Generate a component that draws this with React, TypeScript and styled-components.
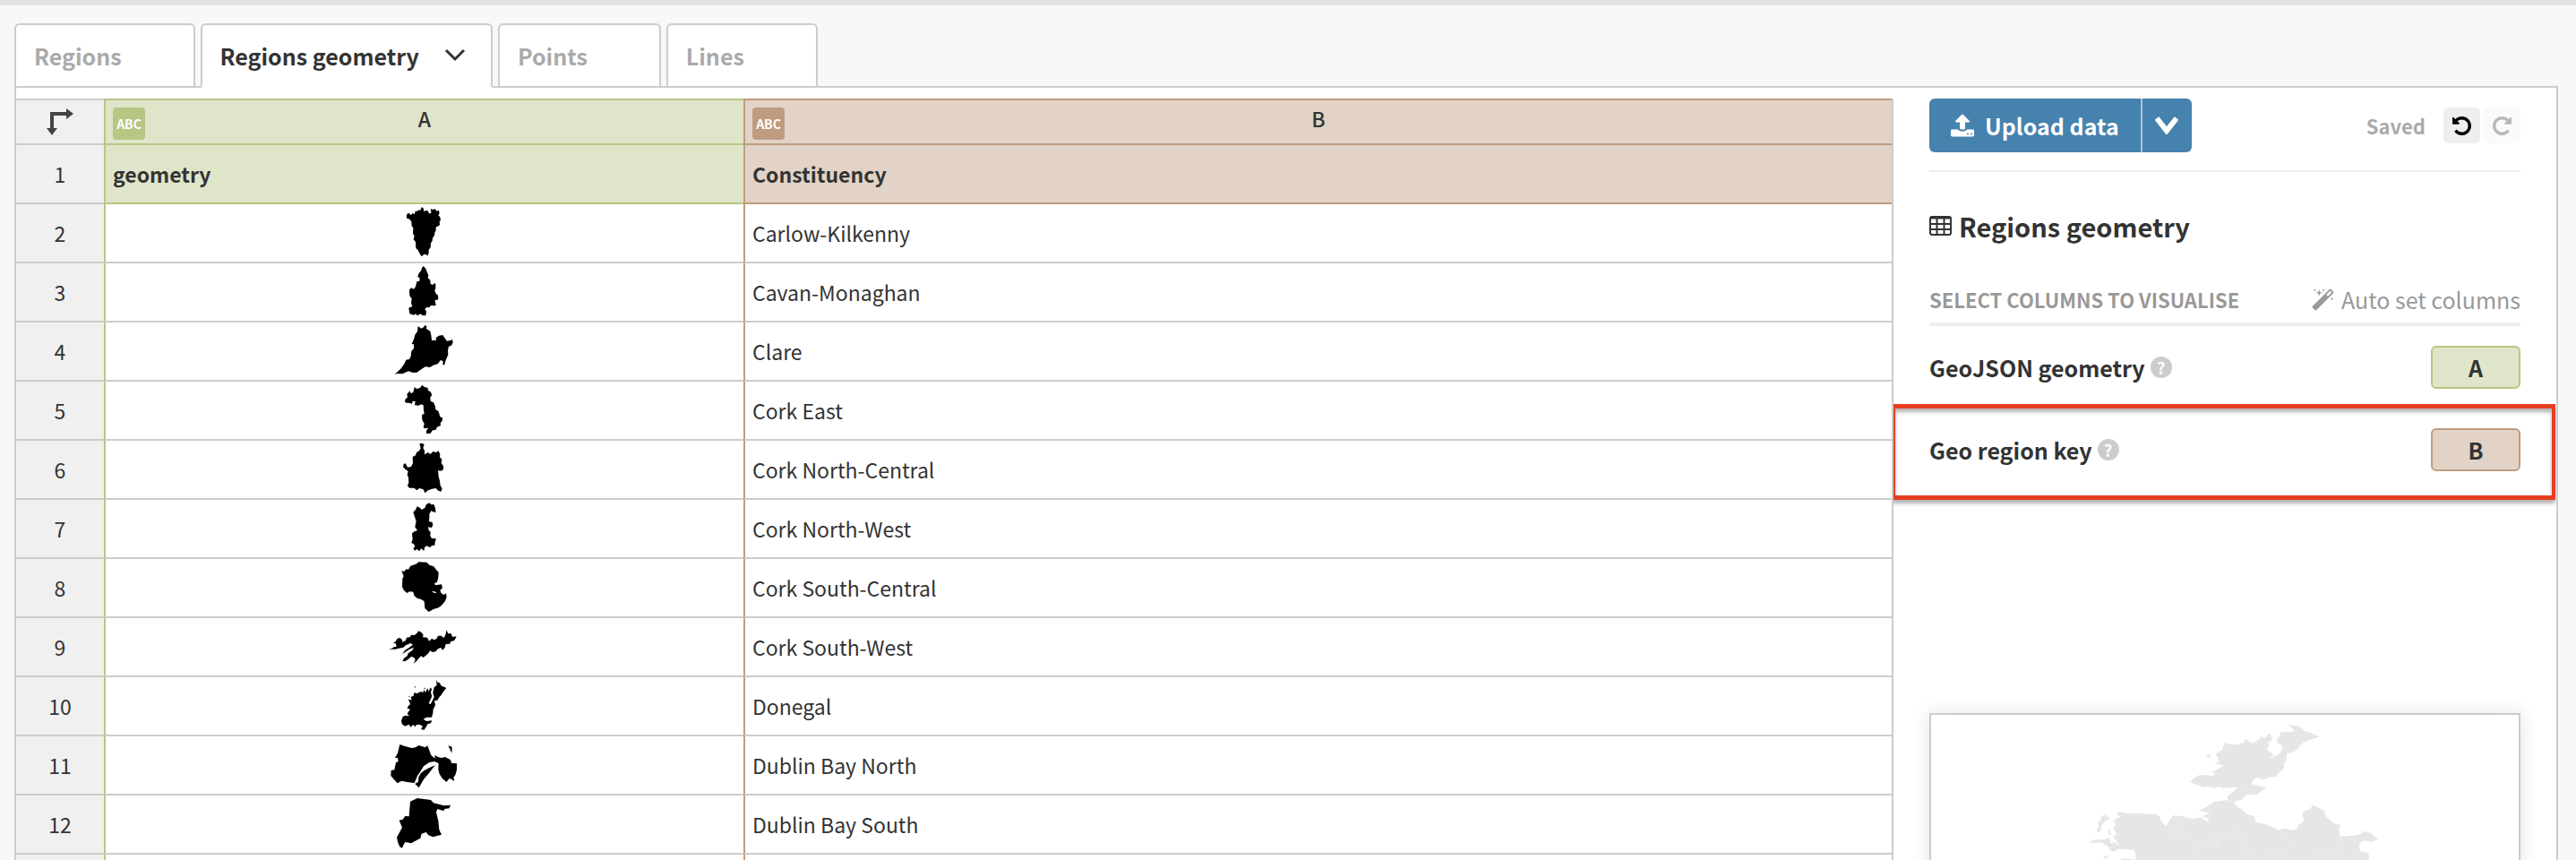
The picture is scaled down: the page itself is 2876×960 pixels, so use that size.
import React from "react";
import styled, { createGlobalStyle, css } from "styled-components";

const GlobalStyle = createGlobalStyle`
  *, *::before, *::after { box-sizing: border-box; }
  body {
    margin: 0;
    background: #f8f8f8;
    color: #333;
    font-family: "Noto Sans CJK SC", "Noto Sans", sans-serif;
    font-size: 23px;
    line-height: 32px;
  }
  button, input { font: inherit; color: inherit; margin: 0; }
`;

const tones = {
  green: { fill: "#dfe5c9", line: "#b8c684" },
  brown: { fill: "#e2d3c6", line: "#bf9c80" },
};
type Tone = keyof typeof tones;

const Page = styled.div`
  display: flex;
  flex-direction: column;
  height: 100vh;
  overflow: hidden;
  padding: 20px 20px 0 16px;
  border-top: 6px solid #e2e2e2;
`;

const TabBar = styled.nav`
  display: flex;
  gap: 6px;
  flex: none;
  margin-bottom: -2px;
  position: relative;
  z-index: 1;
`;

const Tab = styled.button<{ $active?: boolean }>`
  display: flex;
  align-items: center;
  gap: 28px;
  height: 72px;
  padding: 0 ${(p) => (p.$active ? 28 : 80)}px 0 20px;
  background: #fff;
  border: 2px solid #ccc;
  border-bottom-color: ${(p) => (p.$active ? "#fff" : "#ccc")};
  border-radius: 6px 6px 0 0;
  color: ${(p) => (p.$active ? "#333" : "#aaa")};
  font-size: 25px;
  font-weight: 700;
  white-space: nowrap;
`;

const Workspace = styled.main`
  display: flex;
  flex: 1;
  min-height: 0;
  padding-top: 12px;
  background: #fff;
  border: 2px solid #ccc;
  border-bottom: 0;
`;

const Sheet = styled.section`
  flex: 1;
  min-width: 0;
  overflow: hidden;
  border-right: 2px solid #ccc;
`;

const Grid = styled.table`
  width: 100%;
  table-layout: fixed;
  border-spacing: 0;
`;

const IndexCol = styled.col`
  width: 98px;
`;
const GeometryCol = styled.col`
  width: 714px;
`;

const IndexCell = styled.th<{ $corner?: boolean }>`
  height: ${(p) => (p.$corner ? 52 : 66)}px;
  padding: 0;
  background: #f0f0f0;
  border-bottom: 2px solid #ccc;
  border-top: ${(p) => (p.$corner ? "2px solid #ccc" : "0")};
  font-weight: 400;
  text-align: center;
  svg { display: block; margin: 0 auto; }
`;

const toned = css<{ $tone: Tone }>`
  background: ${(p) => tones[p.$tone].fill};
  border: 0 solid ${(p) => tones[p.$tone].line};
`;

const LetterCell = styled.th<{ $tone: Tone }>`
  ${toned}
  border-width: 2px 0 2px 2px;
  padding: 0 8px;
  font-weight: 500;
`;

const LetterRow = styled.div`
  display: grid;
  grid-template-columns: 36px 1fr 36px;
  align-items: start;
`;

const TypeBadge = styled.span<{ $tone: Tone }>`
  height: 36px;
  margin-top: 4px;
  border-radius: 4px;
  background: ${(p) => tones[p.$tone].line};
  color: #fff;
  font-size: 14px;
  font-weight: 700;
  line-height: 36px;
`;

const NameCell = styled.th<{ $tone: Tone }>`
  ${toned}
  border-width: 0 0 2px 2px;
  padding: 0 8px;
  text-align: left;
  font-weight: 600;
`;

const Cell = styled.td<{ $tone: Tone }>`
  padding: ${(p) => (p.$tone === "green" ? "0" : "0 8px")};
  border-left: 2px solid ${(p) => tones[p.$tone].line};
  border-bottom: 2px solid #ccc;
  white-space: nowrap;
  svg { display: block; margin: 0 auto; }
`;

const Sidebar = styled.aside`
  flex: none;
  display: flex;
  flex-direction: column;
  width: 740px;
  padding: 0 40px;
  overflow: hidden;
`;

const Toolbar = styled.div`
  display: flex;
  justify-content: space-between;
  align-items: center;
  padding-bottom: 20px;
  border-bottom: 2px solid #eee;
`;

const SplitButton = styled.div`
  display: flex;
  height: 60px;
`;

const UploadButton = styled.button`
  display: flex;
  align-items: center;
  gap: 12px;
  padding: 0 24px;
  background: #4682ae;
  border: 0;
  border-radius: 6px 0 0 6px;
  color: #fff;
  font-size: 25px;
  font-weight: 700;
`;

const UploadMenuButton = styled.button`
  display: grid;
  place-items: center;
  width: 57px;
  padding: 0;
  background: #4682ae;
  border: 0;
  border-left: 2px solid #a9c6dc;
  border-radius: 0 6px 6px 0;
  color: #fff;
`;

const History = styled.div`
  display: flex;
  align-items: center;
  gap: 4px;
`;

const SavedLabel = styled.span`
  margin-right: 16px;
  color: #aaa;
  font-size: 22px;
  font-weight: 700;
`;

const HistoryButton = styled.button`
  display: grid;
  place-items: center;
  width: 41px;
  height: 40px;
  padding: 0;
  border: 0;
  border-radius: 6px;
  background: #eee;
  color: #000;
  &:disabled { background: #fafafa; color: #b8b8b8; }
`;

const SheetTitle = styled.h2`
  display: flex;
  align-items: center;
  gap: 8px;
  margin: 40px 0 0;
  font-size: 29px;
  line-height: 40px;
`;

const SectionHead = styled.div`
  display: flex;
  justify-content: space-between;
  align-items: center;
  margin-top: 46px;
  padding-bottom: 10px;
  border-bottom: 4px solid #eee;
  color: #999;
`;

const SectionTitle = styled.h3`
  margin: 0;
  font-size: 22px;
  text-transform: uppercase;
`;

const AutoButton = styled.button`
  display: flex;
  align-items: center;
  gap: 8px;
  padding: 0;
  border: 0;
  background: none;
  font-size: 25px;
`;

const Fields = styled.div`
  display: flex;
  flex-direction: column;
  gap: 44px;
  padding-top: 22px;
`;

const Field = styled.div`
  position: relative;
  display: flex;
  align-items: center;
  gap: 6px;
  height: 48px;
`;

const FieldLabel = styled.label`
  font-size: 25px;
  font-weight: 700;
`;

const HelpButton = styled.button`
  width: 24px;
  height: 24px;
  padding: 0;
  border: 0;
  border-radius: 50%;
  background: #ccc;
  color: #fff;
  font-size: 18px;
  font-weight: 700;
  line-height: 22px;
`;

const ColumnInput = styled.input<{ $tone: Tone }>`
  ${toned}
  width: 100px;
  height: 48px;
  margin-left: auto;
  padding: 0;
  border-width: 2px;
  border-radius: 6px;
  font-size: 25px;
  font-weight: 700;
  text-align: center;
`;

const Highlight = styled.span`
  position: absolute;
  inset: -27px -39px -32px -42px;
  border: 4px solid #e83d23;
  border-top-width: 5px;
  border-bottom-width: 5px;
  box-shadow: 0 4px 4px rgba(0, 0, 0, 0.3), inset 0 4px 4px rgba(0, 0, 0, 0.3);
  pointer-events: none;
`;

const Preview = styled.div`
  flex: none;
  height: 420px;
  margin-top: 270px;
  border: 2px solid #ccc;
  box-shadow: 0 0 20px rgba(0, 0, 0, 0.12);
  svg { display: block; width: 100%; height: 300px; }
`;

const Chevron = ({ weight, w, h }: { weight: number; w: number; h: number }) => (
  <svg width={w} height={h} viewBox={`0 0 ${w} ${h}`} fill="none" stroke="currentColor" strokeWidth={weight} aria-hidden>
    <path d={`M2 2L${w / 2} ${h - 4}L${w - 2} 2`} />
  </svg>
);

const UploadIcon = () => (
  <svg width="26" height="26" viewBox="0 40 1664 1664" fill="currentColor" aria-hidden>
    <path d="M1280 1472q0-26-19-45t-45-19-45 19-19 45 19 45 45 19 45-19 19-45zm256 0q0-26-19-45t-45-19-45 19-19 45 19 45 45 19 45-19 19-45zm128-224v320q0 40-28 68t-68 28H96q-40 0-68-28t-28-68v-320q0-40 28-68t68-28h427q21 56 70.500 92t110.500 36h256q61 0 110.500-36t70.500-92h427q40 0 68 28t28 68zm-325-648q-17 40-59 40h-256v448q0 26-19 45t-45 19H704q-26 0-45-19t-19-45V640H384q-42 0-59-40-17-39 14-69L787 83q18-19 45-19t45 19l448 448q31 30 14 69z" />
  </svg>
);

const UndoIcon = ({ flip }: { flip?: boolean }) => (
  <svg width="21" height="21" viewBox="0 128 1536 1536" fill="currentColor" aria-hidden>
    <path
      transform={flip ? "matrix(-1 0 0 1 1536 0)" : undefined}
      d="M1536 896q0 156-61 298t-164 245-245 164-298 61q-172 0-327-72.500T177 1387q-7-10-6.500-22.500T179 1344l137-138q10-9 25-9 16 2 23 12 73 95 179 147t225 52q104 0 198.500-40.500T1130 1258t109.500-163.500T1280 896t-40.500-198.500T1130 534 966.500 424.500 768 384q-98 0-188 35.500T420 521l137 138q31 30 14 69-17 40-59 40H64q-26 0-45-19T0 704V256q0-42 40-59 39-17 69 14l130 129q107-101 244.500-156.500T768 128q156 0 298 61t245 164 164 245 61 298z"
    />
  </svg>
);

const WandIcon = () => (
  <svg width="25" height="25" viewBox="0 0 1664 1664" fill="currentColor" aria-hidden>
    <path d="M1190 581l293-293-107-107-293 293zm447-293q0 27-18 45L333 1619q-18 18-45 18t-45-18L45 1421q-18-18-18-45t18-45L1331 45q18-18 45-18t45 18l198 198q18 18 18 45zM259 98l98 30-98 30-30 98-30-98-98-30 98-30 30-98zM609 260l196 60-196 60-60 196-60-196-196-60 196-60 60-196zM1538 738l98 30-98 30-30 98-30-98-98-30 98-30 30-98zM899 98l98 30-98 30-30 98-30-98-98-30 98-30 30-98z" />
  </svg>
);

const TableIcon = () => (
  <svg width="25" height="22" viewBox="0 0 25 22" fill="none" stroke="currentColor" strokeWidth="2" aria-hidden>
    <rect x="1" y="1" width="23" height="20" rx="2" />
    <path d="M1 2.500h23M1 9h23M1 15h23M8.500 3v18M16.500 3v18" />
  </svg>
);

const CornerIcon = () => (
  <svg width="30" height="30" viewBox="0 0 30 30" fill="#444" aria-hidden>
    <path d="M4 4H22V0L30 6L22 12V8H8V22H12L6 30L0 22H4Z" />
  </svg>
);

const Shape = ({ top, d }: { top: number; d: string }) => (
  <svg width="110" height="64" viewBox={`-3 ${top} 330 192`} fill="#000" aria-hidden>
    <path fillRule="evenodd" d={d} />
  </svg>
);

const rows = [
  { name: "Carlow-Kilkenny", top: 24, d: "M101 62L106 54L112 55L115 61L122 54L128 58L132 46L137 49L141 43L147 45L153 33L159 39L160 49L166 45L173 46L177 55L184 54L183 39L190 42L197 40L203 47L210 44L212 55L208 61L214 67L216 77L212 82L213 94L205 98L200 101L200 112L196 119L195 128L189 137L188 147L183 154L182 169L176 176L176 187L172 197L166 191L159 193L152 199L146 190L140 178L133 171L132 150L125 142L128 130L123 122L124 103L119 97L118 82L110 73L103 72Z" },
  { name: "Cavan-Monaghan", top: 222, d: "M158 231L166 240L170 250L175 262L173 270L181 278L182 291L190 294L194 288L199 291L199 306L196 313L200 323L207 329L208 341L204 345L197 344L198 355L201 361L195 364L183 363L178 370L169 369L163 375L168 383L166 397L154 396L149 391L138 397L132 391L126 395L112 391L109 371L115 368L121 367L117 355L119 340L112 331L111 311L117 304L126 308L132 300L136 283L145 281L146 272L139 266L143 255L150 247L153 238Z" },
  { name: "Clare", top: 420, d: "M61 595L82 575L94 559L100 545L111 543L116 533L118 516L126 507L126 493L119 492L126 476L130 461L138 450L140 432L151 440L160 435L163 428L169 433L168 441L181 449L184 462L186 480L201 479L200 471L210 464L223 462L231 474L237 482L248 480L255 477L257 487L252 497L243 500L240 514L241 528L233 547L228 563L223 560L224 550L216 546L206 559L191 563L180 570L165 568L152 576L135 588L120 587L108 583L88 592L70 591Z" },
  { name: "Cork East", top: 33, d: "M96 101L98 91L105 86L103 76L112 64L116 72L124 69L128 51L135 57L147 54L154 44L161 51L172 53L175 64L182 67L187 77L181 86L182 98L192 103L197 113L199 126L209 133L214 151L222 154L221 165L215 171L216 180L204 185L199 195L189 196L182 206L168 207L168 197L175 188L163 190L158 187L161 174L154 161L153 145L161 140L159 128L158 112L150 109L142 113L129 112L131 99L122 98L120 107L110 104L102 104Z" },
  { name: "Cork North-Central", top: 231, d: "M145 241L154 239L161 244L157 255L162 264L162 277L174 270L181 276L191 267L200 270L209 265L214 277L213 286L220 293L218 305L226 318L223 330L213 332L207 330L209 350L213 366L215 382L221 391L217 402L206 397L200 390L187 392L174 397L163 406L158 394L145 390L136 397L127 389L111 389L105 382L109 371L108 354L104 346L107 333L97 326L90 319L92 309L98 307L105 320L117 318L123 306L122 285L132 280L135 270L144 265L149 256Z" },
  { name: "Cork North-West", top: 429, d: "M124 470L132 462L137 451L147 456L152 462L163 456L168 444L178 439L184 445L193 444L197 454L200 471L190 469L184 466L178 477L178 493L176 501L188 504L190 513L186 522L174 520L176 531L182 536L181 549L186 558L201 559L197 571L196 581L186 582L181 588L168 583L162 589L160 600L151 592L144 601L137 594L129 599L124 592L130 585L126 577L118 573L122 561L120 541L128 535L138 531L130 520L134 501L129 486Z" },
  { name: "Cork South-Central", top: 42, d: "M85 82L94 84L100 76L108 77L115 65L133 59L143 52L170 53L178 62L193 67L201 78L209 86L208 104L204 119L195 124L198 130L219 127L222 139L214 146L217 155L226 162L234 157L236 169L231 183L219 197L209 205L192 210L176 219L169 212L163 207L161 184L152 178L137 173L127 164L124 152L112 151L103 156L93 147L87 135L88 109L92 99ZM186 150L193 155L203 157L196 151Z" },
  { name: "Cork South-West", top: 240, d: "M41 345L53 341L59 337L68 335L65 324L56 325L65 318L71 308L80 306L88 314L86 321L98 316L102 305L112 304L118 296L128 297L136 291L142 283L151 287L158 296L156 304L171 305L177 317L186 309L195 313L202 309L207 299L219 299L225 307L231 299L236 280L241 292L250 291L256 303L269 301L262 315L249 319L247 326L233 327L230 338L223 347L216 339L207 343L199 352L189 354L180 349L175 358L166 365L158 372L150 367L143 374L136 383L125 392L131 380L127 372L117 369L108 377L98 384L88 385L93 374L104 367L107 358L121 348L126 338L112 344L98 353L87 361L96 348L111 338L123 329L115 324L99 331L91 338L76 341L64 344L51 344Z" },
  { name: "Donegal", top: 438, d: "M201 447L206 455L213 457L217 466L235 474L225 486L218 497L210 506L205 515L195 517L198 532L191 545L190 559L186 572L170 572L161 576L159 580L169 585L187 583L183 592L172 595L168 603L160 615L150 611L156 602L146 596L134 598L130 604L124 597L115 605L110 596L96 602L86 594L84 584L89 570L98 566L111 568L104 560L109 552L114 545L104 542L108 533L114 529L111 518L106 513L119 514L116 504L125 500L127 490L137 492L150 486L158 489L159 479L165 489L172 475L176 485L182 472L186 478L183 490L187 501L183 511L178 521L176 526L182 528L188 517L194 505L190 490L194 472L203 464ZM128 468L133 470L130 473ZM160 473L166 474L161 478ZM110 500L114 504L109 504Z" },
  { name: "Dublin Bay North", top: 66, d: "M79 93L94 98L119 105L132 103L143 96L164 103L172 97L178 113L184 129L197 140L196 128L205 134L219 138L231 135L249 145L252 155L270 157L270 178L265 196L259 203L262 216L246 206L235 219L221 206L212 192L208 177L209 156L195 150L178 153L159 166L148 184L138 198L128 222L104 219L85 215L71 223L49 198L50 180L61 178L66 154L74 150L72 138L63 138L72 122ZM197 163L175 191L159 210L143 238L130 225L141 218L142 203L149 190L161 180L178 171ZM241 97L254 101L253 123L247 109Z" },
  { name: "Dublin Bay South", top: 264, d: "M114 284L138 273L183 279L192 289L227 298L249 296L245 307L229 309L226 316L205 309L201 320L208 349L211 379L219 395L190 403L175 397L167 387L152 392L148 407L117 424L98 420L93 426L87 440L79 436L73 422L69 404L87 371L77 347L89 344L97 333L110 334Z" },
];

const MapDrawing = () => (
  <svg viewBox="-492 -6 1968 900" fill="#e6e6e6" aria-hidden>
    <path d="M702 24L716 29L735 31L750 38L754 47L774 51L790 60L810 66L795 73L775 77L755 87L744 97L729 114L716 120L700 123L698 147L690 153L690 172L681 183L669 190L666 202L650 201L631 207L617 212L606 205L592 207L582 219L585 229L607 232L631 238L618 247L599 260L567 261L556 268L549 279L530 282L522 289L535 302L554 314L566 327L591 333L594 353L625 359L651 370L672 380L693 374L717 380L733 376L737 362L758 349L750 326L760 315L774 311L788 295L808 307L824 316L830 333L848 351L860 360L879 362L874 380L878 402L901 400L938 396L962 383L982 391L1004 412L984 420L956 414L944 424L942 441L948 452L973 456L975 480L990 560L970 900L150 900L190 700L140 560L193 480L193 458L187 446L140 443L136 425L118 402L130 394L119 376L126 363L120 346L142 337L129 324L141 318L158 324L206 325L263 326L276 337L278 349L295 368L306 347L319 331L352 334L385 342L412 338L438 354L436 342L418 333L443 322L405 314L429 302L458 284L504 279L499 266L519 253L534 238L519 236L489 239L471 234L456 241L443 235L420 236L404 230L390 225L375 218L389 205L408 195L446 197L459 196L451 184L437 180L458 182L487 164L462 156L457 151L474 153L469 139L461 125L484 110L490 88L512 92L533 94L558 86L556 75L570 80L580 88L600 84L602 72L609 80L611 67L627 71L640 55L650 68L648 82L637 83L640 96L633 112L646 120L655 128L640 139L659 133L673 125L685 111L683 97L668 88L666 74L679 63L675 53L702 51L724 50L717 39Z" />
    <path d="M74 350L80 334L92 328L97 335L109 337L101 345L88 352L78 365L74 385L66 388L63 378L69 370L68 352ZM37 421L51 413L90 410L101 405L110 415L107 424L124 421L137 430L140 442L118 452L108 448L103 436L91 429L76 421L50 422ZM100 384L108 379L108 389L117 394L104 396ZM428 132L437 127L446 133L439 138ZM81 472L95 465L102 471L90 474ZM136 479L156 474L193 480Z" />
    <g fill="none" stroke="#fff" strokeWidth="2" strokeOpacity="0.5" strokeDasharray="10 4">
      <path d="M593 68L615 76L631 82L633 96L628 108M322 370L344 378L330 384L325 402L350 411L369 405L380 418L401 424L398 438L410 452L393 458L395 480M401 409L405 422L432 417L439 430L457 433L470 423L473 434L461 402L490 406L520 384L547 390L553 414M436 424L452 411M554 430L574 452L590 478L620 470L640 464L671 465M690 384L693 405L707 420L705 440L693 452L686 470L705 480M878 402L884 415L875 440L888 462L905 480M875 440L850 444L820 444L808 462L803 480M108 418L119 423L110 448M500 280L540 283M550 240L580 242" />
    </g>
  </svg>
);

export default function App() {
  return (
    <>
      <GlobalStyle />
      <Page>
        <TabBar>
          <Tab>Regions</Tab>
          <Tab $active>
            Regions geometry
            <Chevron w={24} h={16} weight={3} />
          </Tab>
          <Tab>Points</Tab>
          <Tab>Lines</Tab>
        </TabBar>
        <Workspace>
          <Sheet>
            <Grid>
              <colgroup>
                <IndexCol />
                <GeometryCol />
                <col />
              </colgroup>
              <thead>
                <tr>
                  <IndexCell $corner><CornerIcon /></IndexCell>
                  <LetterCell $tone="green">
                    <LetterRow><TypeBadge $tone="green">ABC</TypeBadge>A</LetterRow>
                  </LetterCell>
                  <LetterCell $tone="brown">
                    <LetterRow><TypeBadge $tone="brown">ABC</TypeBadge>B</LetterRow>
                  </LetterCell>
                </tr>
                <tr>
                  <IndexCell>1</IndexCell>
                  <NameCell $tone="green">geometry</NameCell>
                  <NameCell $tone="brown">Constituency</NameCell>
                </tr>
              </thead>
              <tbody>
                {rows.map((row, i) => (
                  <tr key={row.name}>
                    <IndexCell scope="row">{i + 2}</IndexCell>
                    <Cell $tone="green"><Shape top={row.top} d={row.d} /></Cell>
                    <Cell $tone="brown">{row.name}</Cell>
                  </tr>
                ))}
                <tr>
                  <IndexCell />
                  <Cell $tone="green" />
                  <Cell $tone="brown" />
                </tr>
              </tbody>
            </Grid>
          </Sheet>
          <Sidebar>
            <Toolbar>
              <SplitButton>
                <UploadButton><UploadIcon />Upload data</UploadButton>
                <UploadMenuButton aria-label="More upload options">
                  <Chevron w={26} h={20} weight={6} />
                </UploadMenuButton>
              </SplitButton>
              <History>
                <SavedLabel>Saved</SavedLabel>
                <HistoryButton aria-label="Undo"><UndoIcon /></HistoryButton>
                <HistoryButton aria-label="Redo" disabled><UndoIcon flip /></HistoryButton>
              </History>
            </Toolbar>
            <SheetTitle><TableIcon />Regions geometry</SheetTitle>
            <SectionHead>
              <SectionTitle>Select columns to visualise</SectionTitle>
              <AutoButton><WandIcon />Auto set columns</AutoButton>
            </SectionHead>
            <Fields>
              <Field>
                <FieldLabel htmlFor="geometry-column">GeoJSON geometry</FieldLabel>
                <HelpButton aria-label="About GeoJSON geometry">?</HelpButton>
                <ColumnInput id="geometry-column" $tone="green" defaultValue="A" />
              </Field>
              <Field>
                <FieldLabel htmlFor="key-column">Geo region key</FieldLabel>
                <HelpButton aria-label="About Geo region key">?</HelpButton>
                <ColumnInput id="key-column" $tone="brown" defaultValue="B" />
                <Highlight />
              </Field>
            </Fields>
            <Preview><MapDrawing /></Preview>
          </Sidebar>
        </Workspace>
      </Page>
    </>
  );
}
